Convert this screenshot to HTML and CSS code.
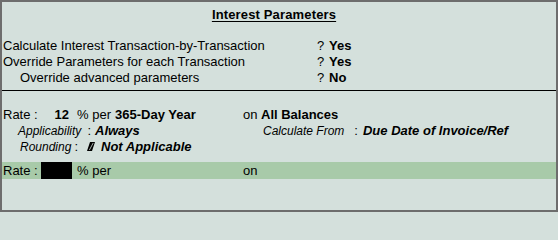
FILE: index.html
```html
<!DOCTYPE html>
<html>
<head>
<meta charset="utf-8">
<link rel="stylesheet" href="styles.css">
</head>
<body>
<div class="window">
  <h1 class="title"><span class="title-text">Interest Parameters</span></h1>

  <div class="opts">
    <div class="opt">
      <span class="lbl">Calculate Interest Transaction-by-Transaction</span>
      <span class="q">?</span><b class="val">Yes</b>
    </div>
    <div class="opt">
      <span class="lbl">Override Parameters for each Transaction</span>
      <span class="q">?</span><b class="val">Yes</b>
    </div>
    <div class="opt">
      <span class="lbl lbl-sub">Override advanced parameters</span>
      <span class="q">?</span><b class="val">No</b>
    </div>
  </div>

  <div class="rates">
    <div class="rate">
      <span class="c1">Rate :</span>
      <b class="c2 amt">12</b>
      <span class="c3">% per</span>
      <b class="c4">365-Day Year</b>
      <span class="c5">on</span>
      <b class="c6">All Balances</b>
    </div>
    <div class="detail">
      <div class="half half-left">
        <i class="dlabel">Applicability</i><span class="colon colon-a">:</span><b class="dval">Always</b>
      </div>
      <div class="half half-right">
        <i class="dlabel">Calculate From</i><span class="colon colon-c">:</span><b class="dval">Due Date of Invoice/Ref</b>
      </div>
    </div>
    <div class="detail">
      <div class="half half-left2">
        <i class="dlabel">Rounding</i><span class="colon colon-r">:</span><svg class="rsym" width="8" height="9" viewBox="0 0 8 9"><polygon points="3,0 8,0 5,9 0,9" fill="#000"/><line x1="6.2" y1="1" x2="2.4" y2="8" stroke="#d4e0dc" stroke-width="0.8"/></svg><b class="dval">Not Applicable</b>
      </div>
    </div>
  </div>

  <div class="rate rate-new">
    <span class="c1">Rate :</span>
    <span class="c2 cursor"></span>
    <span class="c3">% per</span>
    <span class="c4"></span>
    <span class="c5">on</span>
    <span class="c6"></span>
  </div>
</div>
</body>
</html>
```

FILE: styles.css
```css
html, body {
  margin: 0;
  padding: 0;
}

body {
  font-family: "Liberation Sans", Arial, sans-serif;
  font-size: 13px;
  line-height: 16px;
  color: #000;
  background: #d4e0dc;
}

.window {
  box-sizing: border-box;
  width: 558px;
  height: 212px;
  border: 2px solid #6d6d6d;
  background: #d4e0dc;
  overflow: hidden;
}

.title {
  margin: 0;
  padding: 5px 10px 0 0;
  font-size: 13px;
  font-weight: bold;
  line-height: 16px;
  text-align: center;
}

.title-text {
  text-decoration: underline;
  text-decoration-thickness: 1px;
  text-underline-offset: 2px;
  letter-spacing: 0.15px;
}

.opts {
  margin-top: 15px;
  padding-bottom: 4px;
  border-bottom: 1px solid #000;
}

.opt {
  display: flex;
  padding-left: 1px;
}

.lbl {
  box-sizing: border-box;
  width: 314px;
  flex: none;
}

.lbl-sub {
  padding-left: 17px;
}

.q {
  width: 12px;
  flex: none;
}

.val {
  font-weight: bold;
}

.rates {
  padding-top: 16px;
}

.rate {
  display: flex;
  padding-left: 1px;
}

.c1 { width: 38px; flex: none; }
.c2 { width: 31px; flex: none; box-sizing: border-box; }
.c3 { width: 43px; flex: none; box-sizing: border-box; padding-left: 5px; }
.c4 { width: 128px; flex: none; }
.c5 { width: 18px; flex: none; }
.c6 { flex: 1; }

.amt {
  text-align: right;
  padding-right: 3px;
}

b {
  font-weight: bold;
}

.detail {
  display: flex;
  padding-left: 1px;
}

.half {
  display: flex;
  align-items: baseline;
}

.half-left {
  width: 245px;
  padding-left: 15px;
}

.half-left2 {
  padding-left: 17px;
}

.half-right {
  flex: 1;
}

.dlabel {
  font-size: 12px;
  font-style: italic;
}

.colon {
  font-style: normal;
}

.colon-a { margin-left: 6px; margin-right: 4px; }
.colon-c { margin-left: 10px; margin-right: 5px; }
.colon-r { margin-left: 3px; margin-right: 9px; }

.dval {
  font-weight: bold;
  font-style: italic;
}

.rsym {
  margin-right: 6px;
}

.rate-new {
  margin-top: 7px;
  background: #a8caa9;
  height: 17px;
  line-height: 17px;
}

.cursor {
  display: block;
  height: 17px;
  background: #000;
}
```
